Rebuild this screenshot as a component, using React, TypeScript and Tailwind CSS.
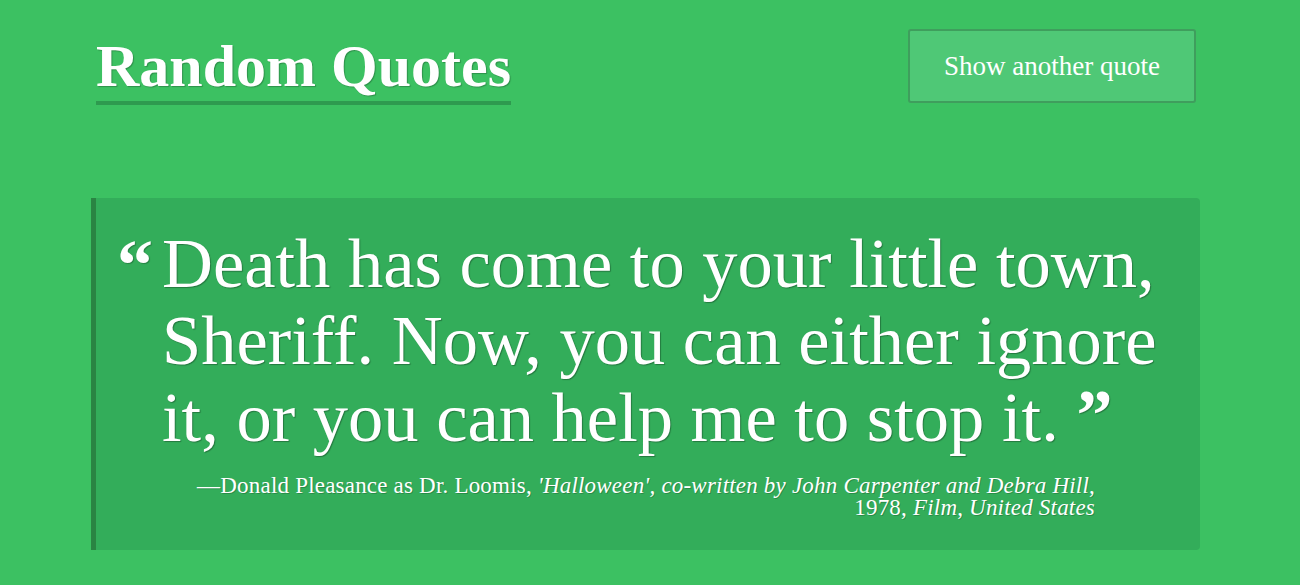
import React from "react";

export default function App() {
  const serif = { fontFamily: '"Liberation Serif", "DejaVu Serif", serif' };
  return (
    <div className="w-[1300px] h-[585px] bg-[#3cc162] overflow-hidden" style={serif}>
      <div className="ml-[91px] w-[1109px]">
        <header className="flex items-start justify-between h-[103px] pt-[29px] pl-[5px] pr-[4px]">
          <h1 className="mt-[7px] text-[60px] leading-[60px] font-bold text-white border-b-[4px] border-[#2e9a4f] pb-[5px] [text-shadow:1px_1px_1px_rgba(0,0,0,0.25)]">
            Random Quotes
          </h1>
          <button className="w-[288px] h-[74px] bg-[#4fc876] border-2 border-[#3f9e5d] rounded-[3px] text-white text-[27px]">
            Show another quote
          </button>
        </header>
        <div className="mt-[95px] h-[352px] bg-[#33ad5a] border-l-[5px] border-[#2a8443] rounded-r-[4px] pt-[27px]">
          <div className="flex pl-[21px]">
            <span className="text-white text-[72px] leading-[72px] font-bold w-[45px] shrink-0 mt-[4px] [text-shadow:1px_1px_1px_rgba(0,0,0,0.25)]">
              “
            </span>
            <p className="text-white text-[70.5px] leading-[77px] [text-shadow:1px_1px_1px_rgba(0,0,0,0.3)] whitespace-nowrap">
              Death has come to your little town,
              <br />
              Sheriff. Now, you can either ignore
              <br />
              it, or you can help me to stop it.{" "}
              <span className="font-bold text-[72px] leading-[0px] relative top-[-2px]">”</span>
            </p>
          </div>
          <p className="mt-[19px] pr-[105px] text-right text-white text-[23px] leading-[22px] tracking-[0.2px] whitespace-nowrap [text-shadow:1px_1px_0_rgba(0,0,0,0.2)]">
            —Donald Pleasance as Dr. Loomis, <i>'Halloween', co-written by John Carpenter and Debra Hill</i>,
            <br />
            1978, <i>Film</i>, <i>United States</i>
          </p>
        </div>
      </div>
    </div>
  );
}
